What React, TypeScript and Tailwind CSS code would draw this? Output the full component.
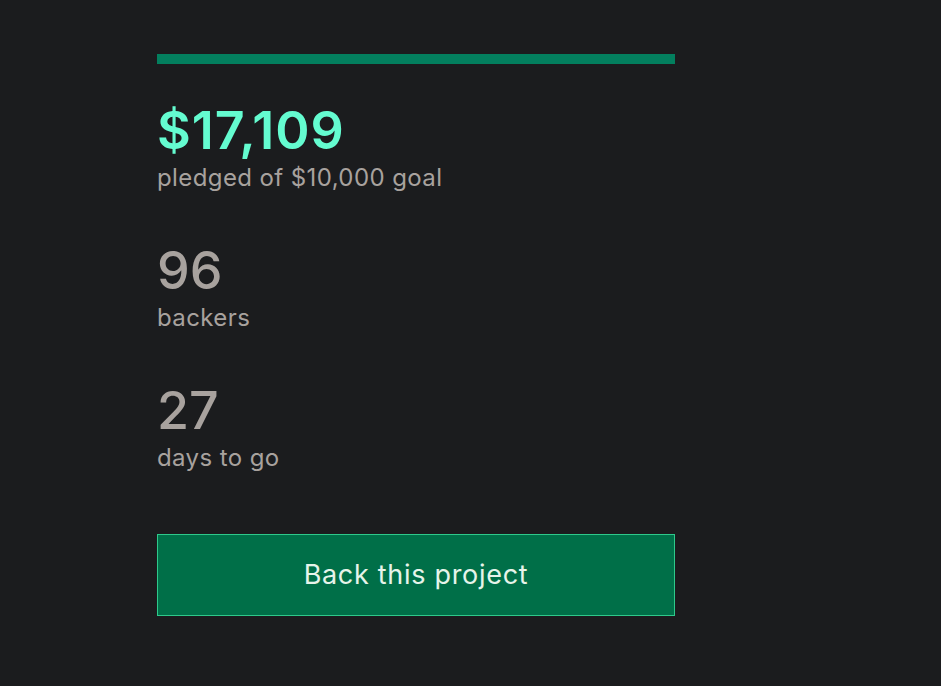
import React from 'react';

const stats = [
  { value: '96', label: 'backers' },
  { value: '27', label: 'days to go' },
];

export default function App() {
  return (
    <div
      className="min-h-screen w-full bg-[#1b1c1e] pl-[157px] pt-[54px]"
      style={{ fontFamily: 'Inter, "Noto Sans", sans-serif' }}
    >
      <div className="w-[518px]">
        {/* progress */}
        <div className="h-[10px] w-full bg-[#037f5e]" />

        <div className="mt-[36px]">
          <div className="text-[52px] leading-[62px] font-semibold tracking-[1px] text-[#64fcd0]">$17,109</div>
          <div className="text-[24px] leading-[32px] tracking-[0.4px] text-[#a8a29e]">pledged of $10,000 goal</div>
        </div>

        {stats.map((s) => (
          <div key={s.label} className="mt-[46px]">
            <div className="text-[52px] leading-[62px] font-medium text-[#a8a29e]">{s.value}</div>
            <div className="text-[24px] leading-[32px] tracking-[0.4px] text-[#a8a29e]">{s.label}</div>
          </div>
        ))}

        <button className="mt-[60px] flex h-[82px] w-full items-center justify-center border border-[#2ec98b] bg-[#006f48] text-[27px] tracking-[0.7px] text-[#e6f4ea]">
          Back this project
        </button>
      </div>
    </div>
  );
}
